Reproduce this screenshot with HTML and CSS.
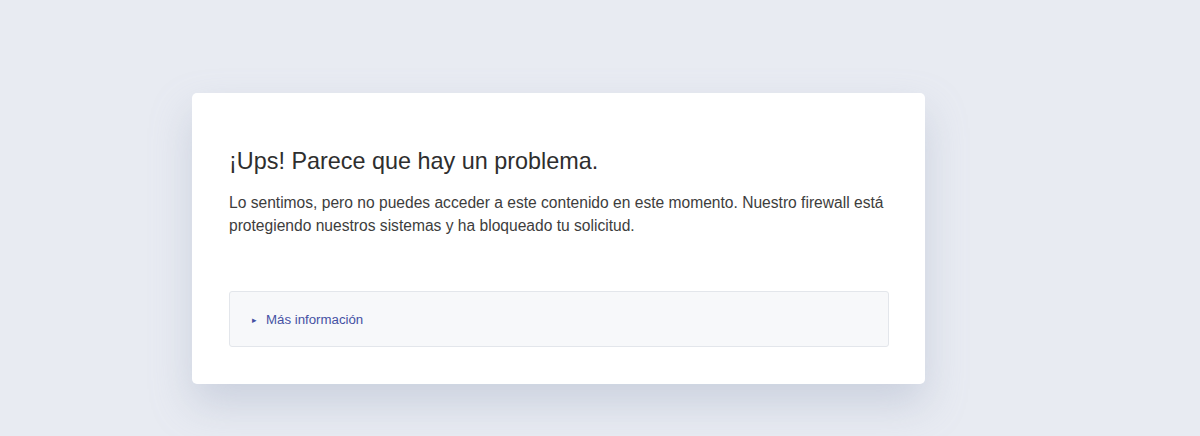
FILE: index.html
```html
<!DOCTYPE html>
<html lang="es">
<head>
    <meta charset="UTF-8">
    <meta name="viewport" content="width=device-width, initial-scale=1.0">
    <title>Acceso bloqueado</title>
    <link rel="stylesheet" href="styles.css">
</head>
<body>

    <div class="page">
        <div class="card">
            <h1>¡Ups! Parece que hay un problema.</h1>
            <p class="message">Lo sentimos, pero no puedes acceder a este contenido en este momento. Nuestro firewall está protegiendo nuestros sistemas y ha bloqueado tu solicitud.</p>
            <details class="more">
                <summary>Más información</summary>
                <p>Si crees que se trata de un error, ponte en contacto con el administrador del sitio.</p>
            </details>
        </div>
    </div>

</body>
</html>
```

FILE: styles.css
```css
body {
    font-family: "Liberation Sans", Arial, sans-serif;
    font-size: 15.6px;
    margin: 0;
    height: 100vh;
    background-color: #e8ebf2;
    color: #333;
    overflow: hidden;
}
.page {
    padding: 93px 0 0 192px;
}
.card {
    width: 733px;
    box-sizing: border-box;
    padding: 36px 36px 37px 37px;
    background-color: #fff;
    border-radius: 5px;
    box-shadow: 0 20px 40px rgba(150, 160, 185, 0.35);
}
h1 {
    font-size: 1.5em;
    font-weight: normal;
    line-height: 1.2;
    margin: 18px 0 16px;
    color: #2e2e2e;
}
.message {
    line-height: 1.5;
    margin: 0 0 53px;
    color: #3d3d3d;
}
.more {
    background-color: #f7f8fa;
    border: 1px solid #e3e6eb;
    border-radius: 3px;
    padding: 20px 22px 18px;
}
.more summary {
    list-style: none;
    font-size: 0.85em;
    line-height: 16px;
    color: #4450a3;
    cursor: pointer;
}
.more summary::-webkit-details-marker {
    display: none;
}
.more summary::before {
    content: "\25B8";
    display: inline-block;
    font-size: 9px;
    width: 14px;
    vertical-align: 1px;
    color: #4450a3;
}
.more p {
    font-size: 0.85em;
    margin: 12px 0 0;
}
```
